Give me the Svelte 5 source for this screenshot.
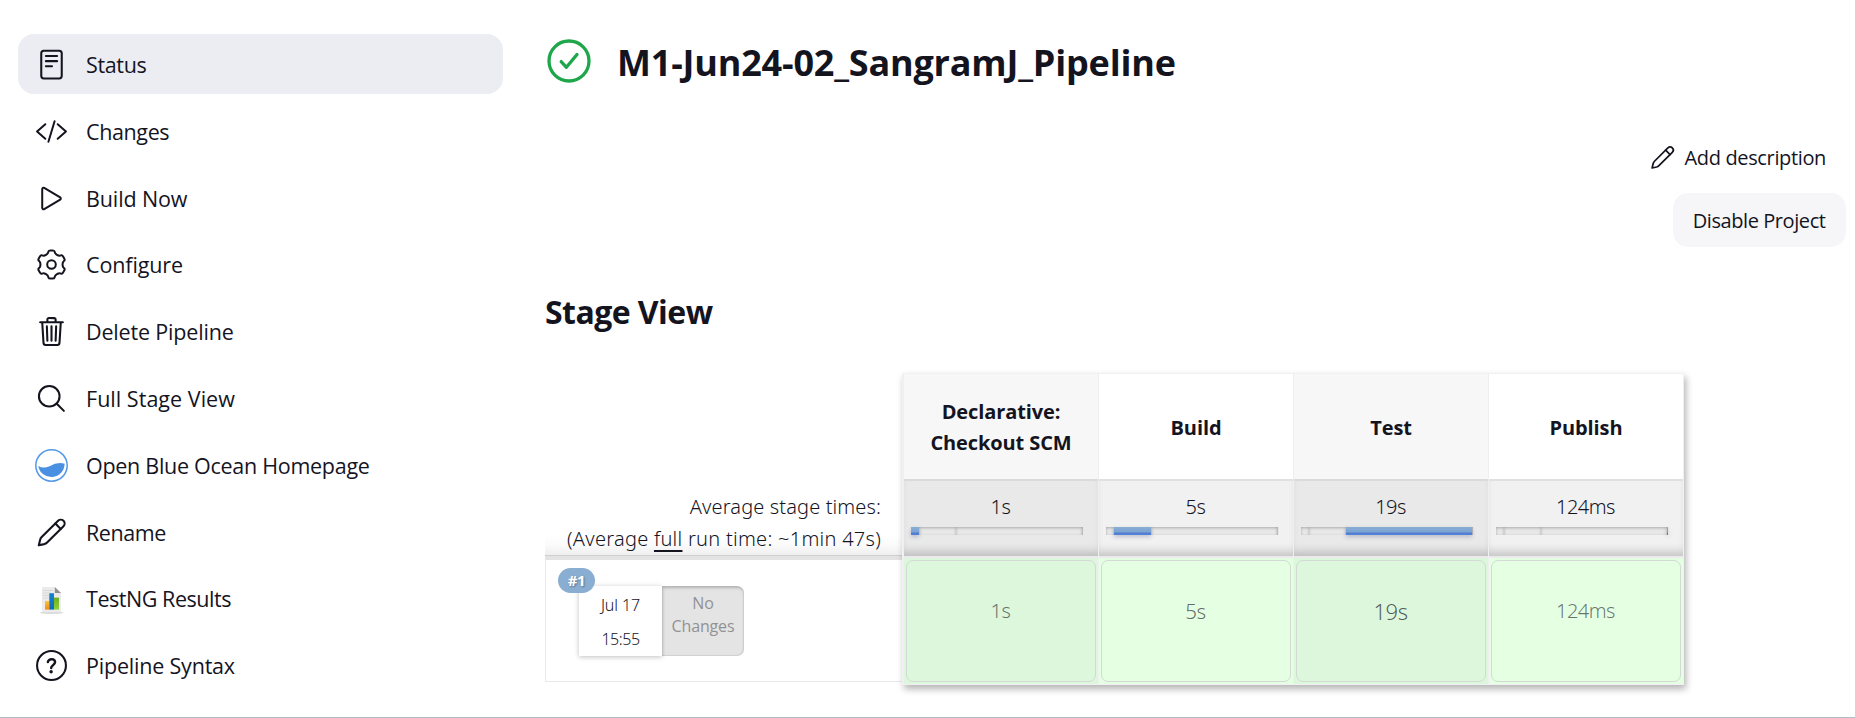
<script>
  const menu = [
    { label: 'Status', icon: 'document', active: true, tracking: -0.35 },
    { label: 'Changes', icon: 'code', tracking: -0.38 },
    { label: 'Build Now', icon: 'play', tracking: -0.12 },
    { label: 'Configure', icon: 'gear', tracking: -0.12 },
    { label: 'Delete Pipeline', icon: 'trash', tracking: -0.17 },
    { label: 'Full Stage View', icon: 'search', tracking: 0.03 },
    { label: 'Open Blue Ocean Homepage', icon: 'ocean', tracking: -0.28 },
    { label: 'Rename', icon: 'pencil', tracking: -0.45 },
    { label: 'TestNG Results', icon: 'report', tracking: -0.45 },
    { label: 'Pipeline Syntax', icon: 'help', tracking: -0.2 },
  ];

  const stages = [
    { name: 'Declarative: Checkout SCM', time: '1s', share: 8, tone: 'low' },
    { name: 'Build', time: '5s', share: 37, tone: 'mid' },
    { name: 'Test', time: '19s', share: 126, tone: 'high' },
    { name: 'Publish', time: '124ms', share: 1, tone: 'low' },
  ];

  // Six-toothed cog with rounded corners, centred in a 33-unit box.
  function cog() {
    const pts = [];
    for (let i = 0; i < 6; i++) {
      for (const [offset, r] of [[-11, 14.1], [11, 14.1], [18, 11.4], [30, 10.3], [42, 11.4]]) {
        const a = ((i * 60 + offset - 90) * Math.PI) / 180;
        const k = offset === 30 ? 11 : r + (offset === 18 || offset === 42 ? 0.3 : 0.2);
        pts.push([16.5 + k * Math.cos(a), 16.5 + k * Math.sin(a)]);
      }
    }
    const mix = (a, b, t) => [a[0] + (b[0] - a[0]) * t, a[1] + (b[1] - a[1]) * t];
    const f = (p) => p.map((v) => v.toFixed(2)).join(' ');
    return pts
      .map((p, i) => {
        const prev = pts[(i + pts.length - 1) % pts.length];
        const next = pts[(i + 1) % pts.length];
        return `${i ? 'L' : 'M'}${f(mix(p, prev, 0.3))}Q${f(p)} ${f(mix(p, next, 0.3))}`;
      })
      .join('') + 'Z';
  }
  const cogPath = cog();
</script>

{#snippet pencil(size)}
  <svg class="line" width={size} height={size} viewBox="0 0 33 33" stroke-width="2.1">
    <path d="M3.800 29.300L5.100 23.900Q5.500 22.300 6.700 21.100L23.100 4.800A3.750 3.750 0 0 1 28.500 10.200L12.100 26.500Q10.900 27.700 9.300 28.100Z" />
    <path d="M20.400 7.600L25.700 12.900" />
  </svg>
{/snippet}

{#snippet icon(name)}
  {#if name === 'pencil'}
    {@render pencil(33)}
  {:else if name === 'gear'}
    <svg class="line" width="33" height="33" viewBox="0 0 33 33" stroke-width="2">
      <path d={cogPath} />
      <circle cx="16.5" cy="16.5" r="4.3" />
    </svg>
  {:else if name === 'ocean'}
    <svg width="33" height="33" viewBox="0 0 33 33">
      <circle cx="16.5" cy="16.5" r="15.7" fill="#fff" stroke="#5498e6" stroke-width="1.5" />
      <path d="M3.2 17Q8.5 20 14.5 17.2Q22.5 12.6 29.6 14.7A13.3 13.3 0 0 1 3.2 17Z" fill="#4a90e2" />
    </svg>
  {:else if name === 'report'}
    <svg width="33" height="33" viewBox="0 0 33 33">
      <defs>
        <linearGradient id="o" x2="0" y2="1"><stop stop-color="#ffc23c" /><stop offset="1" stop-color="#f08a10" /></linearGradient>
        <linearGradient id="b" x2="0" y2="1"><stop stop-color="#1683cf" /><stop offset="1" stop-color="#0a6db8" /></linearGradient>
        <linearGradient id="g" x2="0" y2="1"><stop stop-color="#6fae1f" /><stop offset="1" stop-color="#8fd03a" /></linearGradient>
      </defs>
      <ellipse cx="16.5" cy="30.8" rx="11.5" ry="1" fill="#cfcfcf" />
      <path d="M7 5H19.8L26 11V30.6H7Z" fill="#ebebeb" />
      <path d="M7.6 8.5H18M7.6 11H15M7.6 13.5H15M7.6 16H15" stroke="#d5d5d5" stroke-width=".8" />
      <path d="M19.8 5V11H26Z" fill="#8f8f8f" />
      <path d="M10 19H14.3V27.6H10Z" fill="url(#o)" />
      <path d="M14.3 11.2H19V27.6H14.3Z" fill="url(#b)" />
      <path d="M19 15.6H24V27.6H19Z" fill="url(#g)" />
    </svg>
  {:else}
    <svg class="line" width="33" height="33" viewBox="0 0 512 512" stroke-width="32">
      {#if name === 'document'}
        <rect x="97" y="42" width="318" height="430" rx="40" />
        <path d="M169 124H343M169 204H343M169 284H264" />
      {:else if name === 'code'}
        <path d="M160 368L32 256l128-112M352 368l128-112-128-112M304 96l-96 320" stroke-width="31" />
      {:else if name === 'play'}
        <path d="M112 111v290c0 17.44 17 28.52 31 20.16l247.9-148.37c12.12-7.25 12.12-26.33 0-33.58L143 90.84c-14-8.36-31 2.72-31 20.16z" stroke-width="31" />
      {:else if name === 'trash'}
        <path d="M112 112l20 320c.95 18.49 14.4 32 32 32h184c17.67 0 30.87-13.51 32-32l20-320M80 112h352M192 112V72a23.93 23.93 0 0124-24h80a23.93 23.93 0 0124 24v40M256 176v224M184 176l8 224M328 176l-8 224" />
      {:else if name === 'search'}
        <circle cx="221" cy="221" r="160" />
        <path d="M338.3 338.3L448 448" />
      {:else if name === 'help'}
        <circle cx="256" cy="256" r="224" />
        <path d="M200 202.3s.8-17.5 19.6-32.6C230.7 160.8 244 158.2 256 158c10.9-.1 20.7 1.7 26.5 4.5 10 4.7 29.5 16.3 29.5 41 0 26-17 37.9-36.4 50.9S251 281.4 251 296" stroke-width="38" />
        <circle class="dot" cx="250" cy="354" r="27" />
      {/if}
    </svg>
  {/if}
{/snippet}

<div class="page">
  <nav>
    {#each menu as item}
      <a href="#{item.icon}" class:active={item.active}>
        {@render icon(item.icon)}
        <span style="letter-spacing:{item.tracking}px">{item.label}</span>
      </a>
    {/each}
  </nav>

  <main>
    <header>
      <svg width="48" height="48" viewBox="0 0 48 48" fill="none" stroke="#1ea64b" stroke-width="3.3" stroke-linecap="round" stroke-linejoin="round">
        <circle cx="24" cy="24" r="20" />
        <path d="M16.2 24.6L21.4 30.3L32 17.5" />
      </svg>
      <h1>M1-Jun24-02_SangramJ_Pipeline</h1>
    </header>

    <div class="actions">
      <button class="plain">{@render pencil(27)}Add description</button>
      <button class="filled">Disable Project</button>
    </div>

    <h2>Stage View</h2>

    <section class="board">
      <div class="labels">
        <div class="averages">
          <div>Average stage times:</div>
          <div class="full">(Average <u>full</u> run time: ~1min 47s)</div>
        </div>
        <div class="run">
          <div class="card">
            <div class="when"><span>Jul 17</span><span>15:55</span></div>
            <div class="changes">No<br />Changes</div>
            <span class="badge">#1</span>
          </div>
        </div>
      </div>

      <div class="stages">
        {#each stages as stage, i}
          <div class="stage" class:odd={i % 2 === 0}>
            <div class="name">{stage.name}</div>
            <div class="avg">
              <span>{stage.time}</span>
              <div class="bar">
                {#each stages as part, j}
                  <i class:on={i === j} style="width:{part.share}px"></i>
                {/each}
              </div>
            </div>
            <div class="result"><div class={stage.tone}>{stage.time}</div></div>
          </div>
        {/each}
      </div>
    </section>
  </main>
</div>

<style>
  :global(body) { background: #fff; overflow: hidden; }
  .page {
    box-sizing: border-box;
    width: 1855px;
    height: 718px;
    display: flex;
    border-bottom: 1px solid #b3bbc7;
    color: #14141f;
    font-family: "Open Sans", "Noto Sans", sans-serif;
  }
  .line {
    fill: none;
    stroke: #14141f;
    stroke-linecap: round;
    stroke-linejoin: round;
  }
  .dot { fill: #14141f; stroke: none; }
  svg { display: block; flex: none; }

  nav {
    width: 485px;
    padding: 34px 0 0 18px;
    display: flex;
    flex-direction: column;
    gap: 6.8px;
    flex: none;
  }
  nav a {
    box-sizing: border-box;
    display: flex;
    align-items: center;
    gap: 18px;
    height: 60px;
    flex: none;
    padding: 1px 0 0 17px;
    border-radius: 16px;
    color: inherit;
    text-decoration: none;
    font-size: 21.5px;
  }
  nav a.active { background: #ecedf3; }

  main { flex: 1; padding: 31px 9px 0 42px; }
  header { display: flex; align-items: center; height: 60px; gap: 24px; }
  h1 { margin: 0; padding-top: 4px; font-size: 36px; line-height: 50px; font-weight: 700; letter-spacing: -0.19px; }
  h2 { margin: 43px 0 0; font-size: 32px; line-height: 44px; font-weight: 700; letter-spacing: -0.55px; }

  .actions { margin-top: 39px; display: flex; flex-direction: column; align-items: flex-end; gap: 9px; }
  button {
    display: flex;
    align-items: center;
    gap: 9px;
    height: 54px;
    padding: 1px 20px 0 21px;
    border: 0;
    border-radius: 15px;
    background: none;
    color: inherit;
    font: 400 20px "Open Sans", "Noto Sans", sans-serif;
    letter-spacing: -0.36px;
  }
  button.filled { background: #f6f6f9; letter-spacing: -0.42px; padding-right: 20.5px; padding-left: 20px; }

  .board { display: flex; align-items: flex-end; margin-top: 39px; width: 1140px; }
  .labels { width: 357px; margin-bottom: 3px; }
  .averages {
    box-sizing: border-box;
    height: 76px;
    padding: 11px 21px 0 0;
    text-align: right;
    font: 300 20px/32px "Noto Sans", sans-serif;
    letter-spacing: 0.12px;
    background: linear-gradient(#fff 0, #fff 72%, #fbfbfb 85%, #eee 100%);
  }
  .averages .full { letter-spacing: 0.27px; }
  u { text-decoration-thickness: 2px; text-underline-offset: 4px; }
  .run {
    box-sizing: border-box;
    height: 126px;
    border: 1px solid #e9e9ec;
    border-top: 4px solid #e3e3e3;
    border-right: 0;
    padding: 26px 0 0 33px;
    box-shadow: 0 -1px 0 #cfcfcf;
  }
  .card { position: relative; display: flex; width: 165px; height: 70px; font: 300 16px/23px "Noto Sans", sans-serif; }
  .when {
    width: 83px;
    display: flex;
    flex-direction: column;
    align-items: center;
    gap: 11px;
    padding-top: 8px;
    box-sizing: border-box;
    background: #fff;
    box-shadow: 0 1px 5px rgba(0, 0, 0, 0.25);
    letter-spacing: -0.1px;
  }
  .when span:last-child { letter-spacing: -0.45px; }
  .changes {
    flex: 1;
    padding-top: 6px;
    text-align: center;
    color: #929292;
    font-weight: 400;
    font-family: "Open Sans", sans-serif;
    letter-spacing: -0.15px;
    background: #e4e4e4;
    border-radius: 0 7px 7px 0;
    box-shadow: inset 1px 2px 3px rgba(0, 0, 0, 0.22), inset -1px -1px 1px rgba(0, 0, 0, 0.08);
  }
  .badge {
    position: absolute;
    left: -21px;
    top: -18px;
    width: 37px;
    height: 25px;
    border-radius: 13px;
    background: #8aadd2;
    color: #fff;
    text-align: center;
    font: 700 15px/25px "Open Sans", sans-serif;
    letter-spacing: -0.5px;
    text-shadow: 1px 1px 2px rgba(0, 0, 0, 0.35);
  }

  .stages {
    box-sizing: border-box;
    display: flex;
    gap: 1px;
    width: 782px;
    height: 312px;
    padding-left: 1px;
    border: 1px solid #f1f1f4;
    background: #efeff2;
    box-shadow: 2px 4px 7px rgba(0, 0, 0, 0.3);
  }
  .stage { flex: 1; display: flex; flex-direction: column; min-width: 0; background: #fff; }
  .name {
    height: 105px;
    box-sizing: border-box;
    padding: 1px 14px 0;
    display: flex;
    align-items: center;
    justify-content: center;
    text-align: center;
    font-size: 20px;
    line-height: 31px;
    font-weight: 700;
    letter-spacing: -0.1px;
  }
  .odd .name { background: #f7f7f7; }
  .avg {
    box-sizing: border-box;
    height: 77px;
    padding: 10px 14px 0 7px;
    border-top: 2px solid #e0e0e0;
    background: #f1f1f1;
    box-shadow: inset 0 -9px 10px -5px rgba(0, 0, 0, 0.2);
    font: 300 20px/32px "Noto Sans", sans-serif;
    letter-spacing: -0.5px;
    text-align: center;
  }
  .avg span { display: block; padding-left: 6px; }
  .odd .avg { background: #e9e9e9; border-color: #dadada; }
  .bar { display: flex; height: 8px; margin-top: 4px; background: #e8e8e8; }
  .bar i { height: 8px; flex: none; box-shadow: inset 0 1px 3px rgba(0, 0, 0, 0.27); }
  .bar i.on {
    background: linear-gradient(#8aadd3 0, #7ba3d4 60%, #4f7bd0 80%, #5487dd 100%);
    box-shadow: 0 2px 4px rgba(60, 80, 120, 0.3);
  }
  .result {
    flex: 1;
    box-sizing: border-box;
    padding: 2px;
    border-top: 2px solid #ebebed;
    background: #e4ffe2;
  }
  .odd .result { background: #ddf7dc; }
  .result div {
    box-sizing: border-box;
    height: 122px;
    padding: 0 1px 20px 0;
    display: flex;
    align-items: center;
    justify-content: center;
    border: 1px solid #d3d9d5;
    border-radius: 7px;
    font: 300 20px/32px "Noto Sans", sans-serif;
    letter-spacing: -0.5px;
    color: rgba(20, 20, 31, 0.6);
  }
  .result .mid { font-size: 20.5px; color: rgba(20, 20, 31, 0.65); }
  .result .high { font-size: 22px; color: rgba(20, 20, 31, 0.7); }
</style>
